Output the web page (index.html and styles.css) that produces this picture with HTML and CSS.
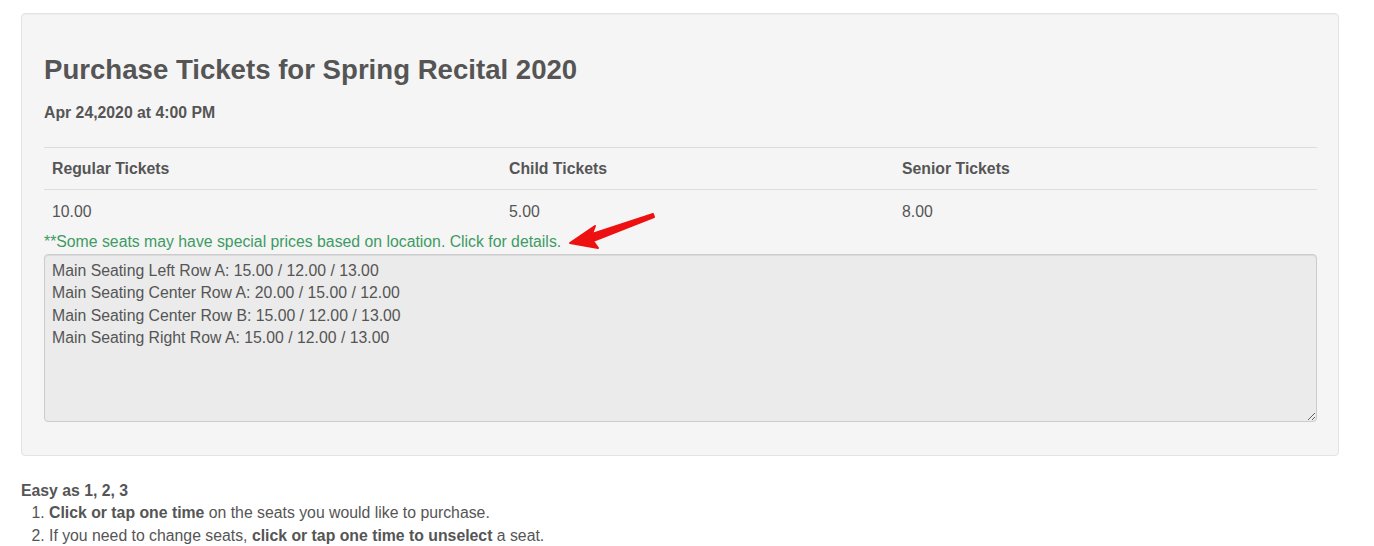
FILE: index.html
```html
<!DOCTYPE html>
<html lang="en">

<head>
  <meta charset="UTF-8">
  <title>Purchase Tickets</title>
  <link rel="stylesheet" href="styles.css">
</head>

<body>
  <div class="page">
    <!-- Cartão do evento -->
    <div class="well">
      <h2 class="title">Purchase Tickets for Spring Recital 2020</h2>
      <div class="date">Apr 24,2020 at 4:00 PM</div>

      <table class="prices">
        <thead>
          <tr>
            <th class="col-regular">Regular Tickets</th>
            <th class="col-child">Child Tickets</th>
            <th class="col-senior">Senior Tickets</th>
          </tr>
        </thead>
        <tbody>
          <tr>
            <td>10.00</td>
            <td>5.00</td>
            <td>8.00</td>
          </tr>
        </tbody>
      </table>

      <div class="note-row">
        <a class="special-note">**Some seats may have special prices based on location. Click for details.</a>
        <svg class="arrow" width="100" height="44" viewBox="0 0 100 44">
          <path d="M97 4 L36 24 L39 16 L14 33 L42 38 L37 31 L98 7 Z" fill="#ee1111" stroke="#ee1111" stroke-width="2" stroke-linejoin="round"/>
        </svg>
      </div>

      <textarea class="seat-prices" readonly>Main Seating Left Row A: 15.00 / 12.00 / 13.00
Main Seating Center Row A: 20.00 / 15.00 / 12.00
Main Seating Center Row B: 15.00 / 12.00 / 13.00
Main Seating Right Row A: 15.00 / 12.00 / 13.00</textarea>
    </div>

    <!-- Instruções -->
    <div class="steps">
      <div class="steps-title">Easy as 1, 2, 3</div>
      <ol>
        <li><b>Click or tap one time</b> on the seats you would like to purchase.</li>
        <li>If you need to change seats, <b>click or tap one time to unselect</b> a seat.</li>
      </ol>
    </div>
  </div>
</body>

</html>
```

FILE: styles.css
```css
body {
  margin: 0;
  font-family: "Liberation Sans", Arial, sans-serif;
  font-size: 15.8px;
  color: #555;
  background: #fff;
}

.page {
  padding: 13px 0 0 21px;
  width: 1318px;
}

.well {
  background: #f5f5f5;
  border: 1px solid #e3e3e3;
  border-radius: 4px;
  padding: 19px 21px 19px 22px;
  box-shadow: inset 0 1px 1px rgba(0, 0, 0, 0.03);
}

.title {
  margin: 22px 0 18px;
  font-size: 27.6px;
  line-height: 30px;
  font-weight: bold;
  color: #555;
}

.date {
  font-weight: bold;
  line-height: 20px;
  margin-bottom: 24px;
}

.prices {
  width: 100%;
  border-collapse: collapse;
}

.prices th,
.prices td {
  text-align: left;
  padding: 10px 8px;
  line-height: 21px;
  border-top: 1px solid #ddd;
}

.prices td {
  padding-top: 11px;
}

.prices th {
  font-weight: bold;
}

.col-regular {
  width: 441px;
}

.col-child {
  width: 377px;
}

.note-row {
  position: relative;
  line-height: 20px;
  height: 20px;
}

.special-note {
  color: #3d9b63;
  cursor: pointer;
}

.arrow {
  position: absolute;
  left: 512px;
  top: -22px;
}

.seat-prices {
  display: block;
  box-sizing: border-box;
  width: 100%;
  height: 168px;
  margin: 2px 0 14px;
  padding: 5px 7px;
  font-family: "Liberation Sans", Arial, sans-serif;
  font-size: 15.8px;
  line-height: 22.4px;
  color: #555;
  background: #ebebeb;
  border: 1px solid #ccc;
  border-radius: 4px;
  box-shadow: inset 0 1px 1px rgba(0, 0, 0, 0.075);
  resize: vertical;
}

.steps {
  margin-top: 25px;
}

.steps-title {
  font-weight: bold;
  line-height: 20px;
}

.steps ol {
  margin: 0;
  padding-left: 28px;
}

.steps li {
  line-height: 23px;
}
```
